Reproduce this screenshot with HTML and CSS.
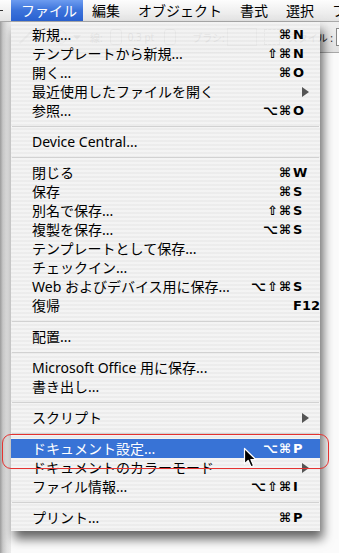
FILE: index.html
```html
<!DOCTYPE html>
<html>
<head>
    <meta charset="utf-8">
    <title>ファイル メニュー</title>
    <link rel="stylesheet" href="styles.css">
</head>
<body>
    <div class="menubar">
        <span class="edge"><i></i></span>
        <span class="bar-item active">ファイル</span>
        <span class="bar-item">編集</span>
        <span class="bar-item">オブジェクト</span>
        <span class="bar-item">書式</span>
        <span class="bar-item">選択</span>
        <span class="bar-item last">フ</span>
    </div>

    <div class="workspace">
        <div class="side-strip"></div>
        <div class="main">
            <!-- control palette, mostly hidden behind the menu -->
            <div class="toolbar">
                <span class="tool-pencil"></span>
                <span class="tool-circle"></span>
                <span class="tool-drop"></span>
                <span class="tool-label stroke">線:</span>
                <span class="tool-step"></span>
                <span class="tool-label weight">0.3 pt</span>
                <span class="tool-step second"></span>
                <span class="tool-label brush">ブラシ:</span>
                <span class="tool-box"></span>
                <span class="tool-icon"></span>
                <span class="tool-label style">スタイル :</span>
                <span class="tool-field"></span>
            </div>
            <div class="doc"></div>
        </div>
    </div>

    <div class="menu">
        <div class="item"><span class="label">新規...</span><span class="mods">⌘</span><span class="key">N</span></div>
        <div class="item"><span class="label">テンプレートから新規...</span><span class="mods">⇧⌘</span><span class="key">N</span></div>
        <div class="item"><span class="label">開く...</span><span class="mods">⌘</span><span class="key">O</span></div>
        <div class="item"><span class="label">最近使用したファイルを開く</span><span class="mods"></span><span class="key"><i class="arrow"></i></span></div>
        <div class="item"><span class="label">参照...</span><span class="mods">⌥⌘</span><span class="key">O</span></div>
        <div class="sep"></div>
        <div class="item"><span class="label">Device Central...</span></div>
        <div class="sep"></div>
        <div class="item"><span class="label">閉じる</span><span class="mods">⌘</span><span class="key">W</span></div>
        <div class="item"><span class="label">保存</span><span class="mods">⌘</span><span class="key">S</span></div>
        <div class="item"><span class="label">別名で保存...</span><span class="mods">⇧⌘</span><span class="key">S</span></div>
        <div class="item"><span class="label">複製を保存...</span><span class="mods">⌥⌘</span><span class="key">S</span></div>
        <div class="item"><span class="label">テンプレートとして保存...</span></div>
        <div class="item"><span class="label">チェックイン...</span></div>
        <div class="item"><span class="label">Web およびデバイス用に保存...</span><span class="mods">⌥⇧⌘</span><span class="key">S</span></div>
        <div class="item"><span class="label">復帰</span><span class="mods"></span><span class="key">F12</span></div>
        <div class="sep"></div>
        <div class="item"><span class="label">配置...</span></div>
        <div class="sep"></div>
        <div class="item"><span class="label">Microsoft Office 用に保存...</span></div>
        <div class="item"><span class="label">書き出し...</span></div>
        <div class="sep"></div>
        <div class="item"><span class="label">スクリプト</span><span class="mods"></span><span class="key"><i class="arrow"></i></span></div>
        <div class="sep"></div>
        <div class="item selected"><span class="label">ドキュメント設定...</span><span class="mods">⌥⌘</span><span class="key">P</span></div>
        <div class="item"><span class="label">ドキュメントのカラーモード</span><span class="mods"></span><span class="key"><i class="arrow"></i></span></div>
        <div class="item"><span class="label">ファイル情報...</span><span class="mods">⌥⇧⌘</span><span class="key">I</span></div>
        <div class="sep"></div>
        <div class="item"><span class="label">プリント...</span><span class="mods">⌘</span><span class="key">P</span></div>
    </div>

    <!-- callout ring drawn over the screenshot -->
    <div class="callout"></div>

    <svg class="cursor" width="14" height="22" viewBox="0 0 14 22">
        <path d="M1.5 1.5 L1.5 17 L5.2 13.4 L8 19.8 L10.6 18.7 L7.9 12.5 L12.8 12.5 Z"
              fill="#000" stroke="#fff" stroke-width="1.2" stroke-linejoin="round"/>
    </svg>
</body>
</html>
```

FILE: styles.css
```css
body {
    margin: 0;
    width: 339px;
    height: 553px;
    overflow: hidden;
    position: relative;
    background: #fff;
    font-family: "Noto Sans", "Noto Sans CJK JP", sans-serif;
    color: #000;
}

/* Menu bar */
.menubar {
    height: 21px;
    display: flex;
    align-items: stretch;
    overflow: hidden;
    background: linear-gradient(#fdfdfd, #eeeeee 60%, #e3e3e3);
    border-bottom: 1px solid #a9a9a9;
    font-size: 14px;
    line-height: 21px;
    white-space: nowrap;
}
.edge {
    width: 11px;
    flex-shrink: 0;
}
.edge i {
    display: block;
    width: 3px;
    height: 1px;
    margin-top: 10px;
    background: #333;
}
.bar-item {
    padding: 0 9px;
}
.bar-item.last {
    padding-right: 0;
}
.bar-item.active {
    padding: 0 6px 0 10px;
    color: #fff;
    background: linear-gradient(#6d9cf0, #3b72da 50%, #2a62d2);
}

/* What sits behind the menu */
.workspace {
    display: flex;
    height: 531px;
}
.side-strip {
    width: 11px;
    flex-shrink: 0;
    background: linear-gradient(to right, #9c9c9c, #c9c9c9 3px, #e2e2e2 7px, #ececec);
}
.main {
    flex: 1;
    display: flex;
    flex-direction: column;
    min-width: 0;
}
.toolbar {
    height: 30px;
    display: flex;
    align-items: center;
    overflow: hidden;
    background: linear-gradient(#f0f0f0, #e2e2e2);
    border-bottom: 1px solid #a8a8a8;
    font-size: 10px;
    color: #222;
    white-space: nowrap;
}
.toolbar > span {
    flex-shrink: 0;
}
.tool-pencil {
    width: 18px;
    height: 2px;
    margin-left: 6px;
    background: #777;
    transform: rotate(-45deg);
}
.tool-circle {
    width: 12px;
    height: 12px;
    margin-left: 18px;
    border: 1px solid #666;
    border-radius: 50%;
}
.tool-drop {
    width: 0;
    height: 0;
    margin-left: 6px;
    border-top: 5px solid #555;
    border-left: 4px solid transparent;
    border-right: 4px solid transparent;
}
.tool-label.stroke {
    margin-left: 9px;
}
.tool-step {
    width: 10px;
    height: 14px;
    margin-left: 7px;
    border: 1px solid #777;
    border-radius: 3px;
}
.tool-label.weight {
    margin-left: 6px;
}
.tool-step.second {
    margin-left: 10px;
}
.tool-label.brush {
    margin-left: 16px;
}
.tool-box {
    width: 28px;
    height: 16px;
    margin-left: 2px;
    border: 1px solid #888;
}
.tool-icon {
    width: 14px;
    height: 14px;
    margin-left: 7px;
    border: 1px dashed #666;
}
.tool-label.style {
    margin-left: auto;
}
.tool-field {
    width: 2px;
    height: 16px;
    margin-left: 3px;
    background: #fff;
    border: 1px solid #888;
    border-right: none;
}
.doc {
    flex: 1;
    background: #fbfbfb;
}

/* The pulled-down menu */
.menu {
    position: absolute;
    left: 11px;
    top: 22px;
    width: 309px;
    padding: 3px 0 4px;
    background: repeating-linear-gradient(rgba(243, 243, 243, 0.93) 0 2px, rgba(235, 235, 235, 0.93) 2px 4px);
    box-shadow: 3px 8px 10px rgba(0, 0, 0, 0.6);
    font-size: 14px;
}
.item {
    height: 19px;
    line-height: 19px;
    display: grid;
    grid-template-columns: 1fr auto 27px;
    padding-left: 21px;
    white-space: nowrap;
}
.mods,
.key {
    font-family: "DejaVu Sans", sans-serif;
    font-size: 13px;
    font-weight: bold;
}
.mods {
    text-align: right;
    padding-right: 1px;
    letter-spacing: 1px;
}
.arrow {
    display: inline-block;
    margin-left: 9px;
    width: 0;
    height: 0;
    border-left: 7px solid #555;
    border-top: 5px solid transparent;
    border-bottom: 5px solid transparent;
    vertical-align: -1px;
}
.item.selected {
    background: #3873d6;
    color: #fff;
}
.sep {
    height: 12px;
    display: flex;
    align-items: center;
}
.sep::before {
    content: "";
    flex: 1;
    height: 1px;
    margin: 0 1px;
    background: #d2d2d2;
}

.callout {
    position: absolute;
    left: 2px;
    top: 434px;
    width: 325px;
    height: 33px;
    border: 1.5px solid #e53331;
    border-radius: 9px;
}
.cursor {
    position: absolute;
    left: 243px;
    top: 447px;
}
```
